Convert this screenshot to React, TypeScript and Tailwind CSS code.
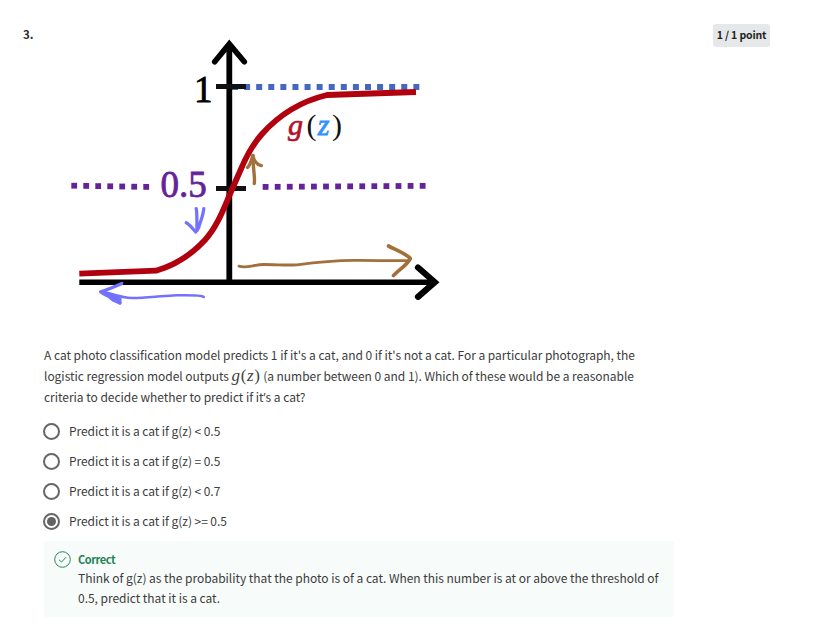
import React from "react";

const PURPLE = "#65239a";
const BROWN = "#a2713b";
const INK = "#7272ff";
const SERIF = '"Liberation Serif", serif';

function Chart() {
  return (
    <svg width="440" height="290" viewBox="30 24 440 290" className="block" fill="none">
      {Array.from({ length: 16 }, (_, i) => (
        <rect key={i} x={232 + i * 12.09} y="84" width="6" height="6" fill="#4467c0" />
      ))}
      {Array.from({ length: 7 }, (_, i) => (
        <rect key={i} x={71.3 + i * 12} y={182.8 + i * 0.2} width="5.8" height="5.8" fill={PURPLE} />
      ))}
      {Array.from({ length: 14 }, (_, i) => (
        <rect key={i} x={262.7 + i * 12.08} y={184 - i * 0.08} width="5.8" height="5.8" fill={PURPLE} />
      ))}

      <g stroke="#000">
        <path d="M229.3 45V282" strokeWidth="5.8" />
        <path d="M79.3 282.2H436" strokeWidth="5.6" />
        <path d="M214.7 61.8L229.3 44L244.3 61.8" strokeWidth="5.6" strokeLinecap="round" />
        <path d="M418 267.5L434.8 282.2L418 296.8" strokeWidth="6.2" strokeLinecap="round" />
        <path d="M216 86.5H246M216 188.5H246" stroke="#111" strokeWidth="5" />
      </g>

      <path
        d="M79.3 273.7L156 270.7C176 265 193 253 205 240C217 227 224 208 230 194L241 169C246 157 253 144 262 134C279 115 302 101 327 95L416 92"
        stroke="#b1000e"
        strokeWidth="5.8"
      />

      <g stroke={BROWN} strokeWidth="3.4" strokeLinecap="round" strokeLinejoin="round">
        <path d="M254.3 183.5C255.3 177 252.8 169 253 155.5" />
        <path d="M247.5 167.5C250.5 165 251.5 160 252.8 155.5C254 161 257 164.5 261.3 165.6" />
        <path d="M239 266.2C247 268.5 254 264.5 264 264.5C277 264.5 286 265.5 297 264.8C319 262 335 260.6 354 260.4C375 260.2 390 261 408 260.6" strokeWidth="2.8" />
        <path d="M388.5 246C396 250 407 254 410.3 258.6C407 265 400 269 393.5 275.5" strokeWidth="3.7" />
      </g>

      <g stroke={INK} strokeWidth="3.2" strokeLinecap="round" strokeLinejoin="round">
        <path d="M196.2 208.5C197.5 215 196.5 224 197 230.5C200 224 203 216 203.8 208.5" />
        <path d="M186.2 222.7C190 224.5 192.5 229 195.8 232L199 227" />
        <path d="M203.8 297C201 294.8 187 295.2 173.3 295.4C158 296 147 298 132 298C123 298 112 294 103 291.5" strokeWidth="2.5" />
        <path d="M121.8 283.5C114 287 107 290 100.5 291.7C104 294.5 109 296.5 113 297L119.8 303L120 299L107 294" />
        <path d="M106 294L113 300L120 303" />
      </g>

      <text x="194" y="101.5" fontFamily={SERIF} fontSize="37" fill="#000" stroke="#000" strokeWidth="0.8">1</text>
      <text x="160.5" y="197" fontFamily={SERIF} fontSize="37" fill={PURPLE} stroke={PURPLE} strokeWidth="0.8">0.5</text>
      <text y="134.7" fontFamily={SERIF} fontSize="30">
        <tspan x="288" fontStyle="italic" fill="#b3102a" stroke="#b3102a" strokeWidth="0.7">g</tspan>
        <tspan x="306.5" fill="#111">(</tspan>
        <tspan x="317.8" fontStyle="italic" fill="#3390ff" stroke="#3390ff" strokeWidth="0.8">z</tspan>
        <tspan x="332" fill="#111">)</tspan>
      </text>
    </svg>
  );
}

const options = ["< 0.5", "= 0.5", "< 0.7", ">= 0.5"];

function Option({ label, checked }: { label: string; checked: boolean }) {
  return (
    <label className="-ml-px flex h-[30px] items-center">
      <span className="flex size-[17px] items-center justify-center rounded-full border-2 border-[#666]">
        {checked && <span className="size-[9px] rounded-full bg-[#636363]" />}
      </span>
      <span className="ml-[9px] whitespace-pre tracking-[-0.06px]">Predict it is a cat if g(z) {label}</span>
    </label>
  );
}

export default function App() {
  return (
    <main className="flex h-[642px] w-[832px] overflow-hidden bg-white pt-6 font-['Noto_Sans_CJK_SC',sans-serif] text-[12px] text-[#3c3c3c]">
      <div className="w-[44px] shrink-0 pl-[23px] text-[11.5px] font-bold leading-5 text-[#2b2b2b]">3.</div>
      <section className="w-[630px] shrink-0">
        <div className="-ml-[14px] h-[320px]">
          <Chart />
        </div>
        <div className="whitespace-nowrap leading-[21px]">
          <p className="tracking-[-0.03px]">A cat photo classification model predicts 1 if it's a cat, and 0 if it's not a cat. For a particular photograph, the</p>
          <p className="h-[21px] tracking-[-0.03px]">
            logistic regression model outputs{" "}
            <span className="font-['Liberation_Serif',serif] text-[17px] leading-none tracking-[0.6px] text-[#444]"><i>g</i>(<i>z</i>)</span>{" "}
            (a number between 0 and 1). Which of these would be a reasonable
          </p>
          <p className="tracking-[-0.03px]">criteria to decide whether to predict if it<span className="font-['Open_Sans',sans-serif] leading-none">’</span>s a cat?</p>
        </div>
        <div className="mt-[9px]">
          {options.map((o, i) => (
            <Option key={o} label={o} checked={i === 3} />
          ))}
        </div>
        <div className="mt-[5px] flex h-[76px] bg-[#f7fbf9] pt-2 pl-[10px]">
          <svg width="17" height="17" viewBox="0 0 17 17" fill="none" stroke="#25875a" className="mt-[2px] shrink-0">
            <circle cx="8.5" cy="8.5" r="7.8" />
            <path d="M4.9 8.7L7.5 11.1L12 6.2" />
          </svg>
          <div className="ml-[7px] whitespace-nowrap leading-5">
            <h3 className="h-[19px] text-[11px] font-bold tracking-[-0.45px] text-[#1f8354]">Correct</h3>
            <p className="tracking-[-0.03px]">Think of g(z) as the probability that the photo is of a cat. When this number is at or above the threshold of</p>
            <p className="tracking-[-0.03px]">0.5, predict that it is a cat.</p>
          </div>
        </div>
      </section>
      <div className="ml-[39px] flex h-[23px] w-[57px] items-center justify-center whitespace-nowrap rounded-[3px] bg-[#e5e7e8] pb-[2px] text-[10.5px] font-bold tracking-[-0.15px] text-[#1f1f1f]">
        1 / 1 point
      </div>
    </main>
  );
}
